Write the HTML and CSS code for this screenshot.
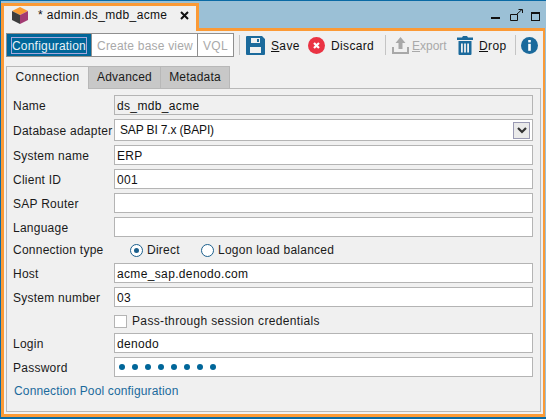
FILE: index.html
```html
<!DOCTYPE html>
<html lang="en">
<head>
<meta charset="utf-8">
<title>admin.ds_mdb_acme</title>
<link rel="stylesheet" href="styles.css">
</head>
<body>
<div class="window">
  <div class="titlebar">
    <div class="doc-tab">
      <svg class="cube" width="18" height="17" viewBox="0 0 18 17"><path d="M9 0 17 4 9 8 1 4Z" fill="#f99b32"/><path d="M1 4 9 8V17L1 13Z" fill="#3d3d3d"/><path d="M17 4 9 8V17L17 13Z" fill="#a23a72"/></svg>
      <span class="doc-title">* admin.ds_mdb_acme</span>
      <svg class="close" width="9" height="9" viewBox="0 0 9 9"><path d="M1 1 8 8M8 1 1 8" stroke="#111" stroke-width="2" fill="none"/></svg>
    </div>
    <div class="win-controls">
      <svg class="wc-min" width="9" height="3" viewBox="0 0 9 3"><rect width="9" height="2" y="1" fill="#111"/></svg>
      <svg class="wc-restore" width="13" height="12" viewBox="0 0 13 12"><path d="M.5 5.500H7.500V11.500H.5Z M7 5 12 .5M8.500 .5H12.500V4" fill="none" stroke="#111"/></svg>
      <svg class="wc-max" width="9" height="9" viewBox="0 0 9 9"><rect x=".5" y="1" width="8" height="7.500" fill="none" stroke="#111"/><rect y="0" width="9" height="2" fill="#111"/></svg>
    </div>
  </div>
  <div class="frame">
    <div class="toolbar">
      <div class="segments">
        <div class="seg seg-active"><span class="focus-ring">Configuration</span></div>
        <div class="seg seg-base">Create base view</div>
        <div class="seg seg-vql">VQL</div>
      </div>
      <span class="sep sep-a"></span>
      <svg class="icon ic-save" width="19" height="19" viewBox="0 0 19 19"><path fill-rule="evenodd" d="M1 0H16L19 3V18A1 1 0 0 1 18 19H1A1 1 0 0 1 0 18V1A1 1 0 0 1 1 0ZM5 2V7H14V2ZM11 3H13V6H11ZM4 11V17H15V11Z" fill="#1b6a9c"/></svg>
      <span class="tool tool-save"><u>S</u>ave</span>
      <svg class="icon ic-discard" width="17" height="17" viewBox="0 0 17 17"><circle cx="8.500" cy="8.500" r="8.500" fill="#ea3343"/><path d="M6 6 11 11M11 6 6 11" stroke="#fff" stroke-width="2.200" fill="none"/></svg>
      <span class="tool tool-discard">Discard</span>
      <span class="sep sep-b"></span>
      <svg class="icon ic-export" width="17" height="17" viewBox="0 0 17 17"><path d="M8.500 0 13.500 6H10.500V12H6.500V6H3.500Z" fill="#a8a8a8"/><path d="M1 10V16H16V10" fill="none" stroke="#a8a8a8" stroke-width="2"/></svg>
      <span class="tool tool-export"><u>E</u>xport</span>
      <svg class="icon ic-drop" width="16" height="19" viewBox="0 0 16 19"><path fill-rule="evenodd" d="M5 1.500 6 0H10L11 1.500H16V4H0V1.500ZM1.500 5H14.500V18A1 1 0 0 1 13.500 19H2.500A1 1 0 0 1 1.500 18ZM4 7.500V16.500H5.800V7.500ZM7.100 7.500V16.500H8.900V7.500ZM10.200 7.500V16.500H12V7.500Z" fill="#1b6a9c"/></svg>
      <span class="tool tool-drop"><u>D</u>rop</span>
      <span class="sep sep-c"></span>
      <svg class="icon ic-info" width="17" height="17" viewBox="0 0 17 17"><circle cx="8.500" cy="8.500" r="8.500" fill="#1b6a9c"/><rect x="7.200" y="3" width="2.600" height="2.400" fill="#fff"/><rect x="7.200" y="6.800" width="2.600" height="7" fill="#fff"/></svg>
    </div>
    <div class="tabs">
      <div class="tab tab-active">Connection</div>
      <div class="tab tab-adv">Advanced</div>
      <div class="tab tab-meta">Metadata</div>
    </div>
    <div class="panel">
      <div class="row"><label class="lbl">Name</label><div class="field field-ro">ds_mdb_acme</div></div>
      <div class="row row-adapter"><label class="lbl">Database adapter</label>
        <div class="field field-select"><span>SAP BI 7.x (BAPI)</span>
          <span class="sel-btn"><svg width="10" height="7" viewBox="0 0 10 7"><path d="M1 1 5 5 9 1" fill="none" stroke="#333" stroke-width="2.200"/></svg></span>
        </div>
      </div>
      <div class="row"><label class="lbl">System name</label><div class="field">ERP</div></div>
      <div class="row"><label class="lbl">Client ID</label><div class="field">001</div></div>
      <div class="row"><label class="lbl">SAP Router</label><div class="field"></div></div>
      <div class="row"><label class="lbl">Language</label><div class="field"></div></div>
      <div class="row row-conn"><label class="lbl">Connection type</label>
        <div class="radios">
          <span class="radio radio-on"></span><span class="radio-text radio-text-a">Direct</span>
          <span class="radio"></span><span class="radio-text">Logon load balanced</span>
        </div>
      </div>
      <div class="row"><label class="lbl">Host</label><div class="field">acme_sap.denodo.com</div></div>
      <div class="row"><label class="lbl">System number</label><div class="field">03</div></div>
      <div class="row row-check"><span class="lbl"></span><span class="check"></span><span class="check-text">Pass-through session credentials</span></div>
      <div class="row"><label class="lbl">Login</label><div class="field">denodo</div></div>
      <div class="row"><label class="lbl">Password</label>
        <div class="field field-pass"><i></i><i></i><i></i><i></i><i></i><i></i><i></i><i></i></div>
      </div>
      <div class="pool-link">Connection Pool configuration</div>
    </div>
  </div>
</div>
</body>
</html>
```

FILE: styles.css
```css
* { box-sizing: border-box; }
html, body { margin: 0; padding: 0; }
body {
  width: 546px;
  height: 419px;
  overflow: hidden;
  font: 12px "Liberation Sans", Arial, sans-serif;
  letter-spacing: .35px;
  color: #1a1a1a;
}
.window {
  width: 546px;
  height: 419px;
  background: #9bc0d6;
  border-top: 1px solid #0a6aa5;
  border-left: 1px solid #0a6aa5;
  border-bottom: 2px solid #0a6aa5;
  display: flex;
  flex-direction: column;
}
.titlebar {
  height: 27px;
  padding-top: 2px;
  display: flex;
  flex: none;
  justify-content: space-between;
  position: relative;
  z-index: 2;
}
.doc-tab {
  width: 198px;
  height: 28px;
  background: #f0f0f0;
  border: 3px solid #fb9a36;
  border-bottom: 0;
  display: flex;
  align-items: center;
  padding-left: 7px;
  padding-bottom: 7px;
}
.cube { flex: none; margin-top: 1px; }
.doc-title { margin-left: 9px; width: 142px; white-space: nowrap; color: #111; }
.close { flex: none; }
.win-controls { display: flex; align-items: flex-start; padding-top: 7px; padding-right: 6px; }
.wc-min { margin-top: 6px; }
.wc-restore { margin-left: 10px; margin-top: -1px; }
.wc-max { margin-left: 8px; margin-top: 2px; }
.frame {
  flex: 1;
  background: #f0f0f0;
  border: 3px solid #fb9a36;
  border-right-width: 2px;
  padding: 2px 0 0 2px;
  margin-right: 1px;
  display: flex;
  flex-direction: column;
  min-height: 0;
}
.toolbar { display: flex; align-items: center; height: 24px; flex: none; }
.segments {
  display: flex;
  height: 24px;
  width: 228px;
  border: 1px solid #8f8f8f;
  background: #fff;
  flex: none;
}
.seg { display: flex; align-items: center; justify-content: center; color: #a9a9a9; padding-top: 1px; }
.seg-active { width: 85px; background: #006699; border-right: 1px solid #8f8f8f; color: #e8f2f8; padding-top: 0; }
.focus-ring { border: 1px solid #a7a7dc; width: 76px; height: 17px; line-height: 16px; display: flex; justify-content: center; white-space: nowrap; letter-spacing: .2px; }
.seg-base { width: 106px; border-right: 1px solid #8f8f8f; white-space: nowrap; letter-spacing: .2px; padding-left: 1px; }
.seg-vql { flex: 1; }
.sep { width: 1px; height: 20px; background: #c4c4c4; flex: none; }
.sep-a { margin-left: 5px; }
.icon { flex: none; margin-top: 1px; }
.ic-save { margin-left: 6px; }
.tool { color: #111; white-space: nowrap; padding-top: 2px; }
.tool-save { margin-left: 6px; width: 37px; }
.tool-discard { margin-left: 6px; width: 54px; }
.ic-export { margin-left: 6px; }
.tool-export { margin-left: 3px; width: 45px; color: #a9a9a9; letter-spacing: 0; }
.tool-drop { margin-left: 6px; width: 36px; }
.ic-info { margin-left: 5px; }
.tabs { display: flex; margin-top: 9px; height: 22px; flex: none; }
.tab {
  border: 1px solid #b8b8b8;
  border-bottom: 0;
  display: flex;
  align-items: center;
  justify-content: center;
  background: #c8c8c8;
  height: 22px;
  padding-bottom: 2px;
  letter-spacing: .2px;
}
.tab-active {
  width: 83px;
  height: 23px;
  background: #f0f0f0;
  position: relative;
  z-index: 1;
  padding-bottom: 3px;
  letter-spacing: .35px;
}
.tab-adv { width: 72px; border-left: 0; }
.tab-meta { width: 69px; border-left: 0; }
.panel {
  width: 535px;
  height: 324px;
  border: 1px solid #b8b8b8;
  padding: 6px 7px 0 6px;
}
.row { display: flex; height: 20px; margin-bottom: 4px; align-items: center; }
.lbl { width: 101px; flex: none; white-space: nowrap; color: #1a1a1a; padding-top: 2px; letter-spacing: .25px; }
.field {
  width: 420px;
  height: 20px;
  background: #fff;
  border: 1px solid #b4b4b4;
  padding-left: 2px;
  line-height: 20px;
  color: #111;
}
.field-ro { background: #f0f0f0; }
.row-adapter { height: 22px; }
.field-select { height: 22px; line-height: 20px; padding-left: 5px; display: flex; justify-content: space-between; align-items: center; padding-right: 2px; letter-spacing: -.15px; }
.sel-btn {
  width: 17px;
  height: 17px;
  border: 1px solid #9a9ab4;
  background: #eaeaea;
  display: flex;
  align-items: center;
  justify-content: center;
}
.row-conn { margin-top: -2px; }
.radios { display: flex; align-items: center; padding-left: 16px; padding-top: 2px; }
.radio {
  width: 13px;
  height: 13px;
  border-radius: 50%;
  border: 1px solid #1b5f8c;
  background: #fff;
  flex: none;
  display: flex;
  align-items: center;
  justify-content: center;
}
.radio-on::after { content: ""; width: 5px; height: 5px; border-radius: 50%; background: #1b5f8c; }
.radio-text { margin-left: 4px; white-space: nowrap; letter-spacing: .25px; }
.radio-text-a { width: 54px; }
.row-check { margin-bottom: 2px; }
.check { width: 13px; height: 13px; border: 1px solid #b4b4b4; background: #fff; flex: none; }
.check-text { margin-left: 5px; white-space: nowrap; }
.pool-link { margin-top: 7px; padding-left: 1px; color: #1b6a9c; letter-spacing: .15px; }
.field-pass { display: flex; align-items: center; gap: 7px; padding-left: 4px; }
.field-pass i { width: 6px; height: 6px; border-radius: 50%; background: #006699; display: block; }
```
